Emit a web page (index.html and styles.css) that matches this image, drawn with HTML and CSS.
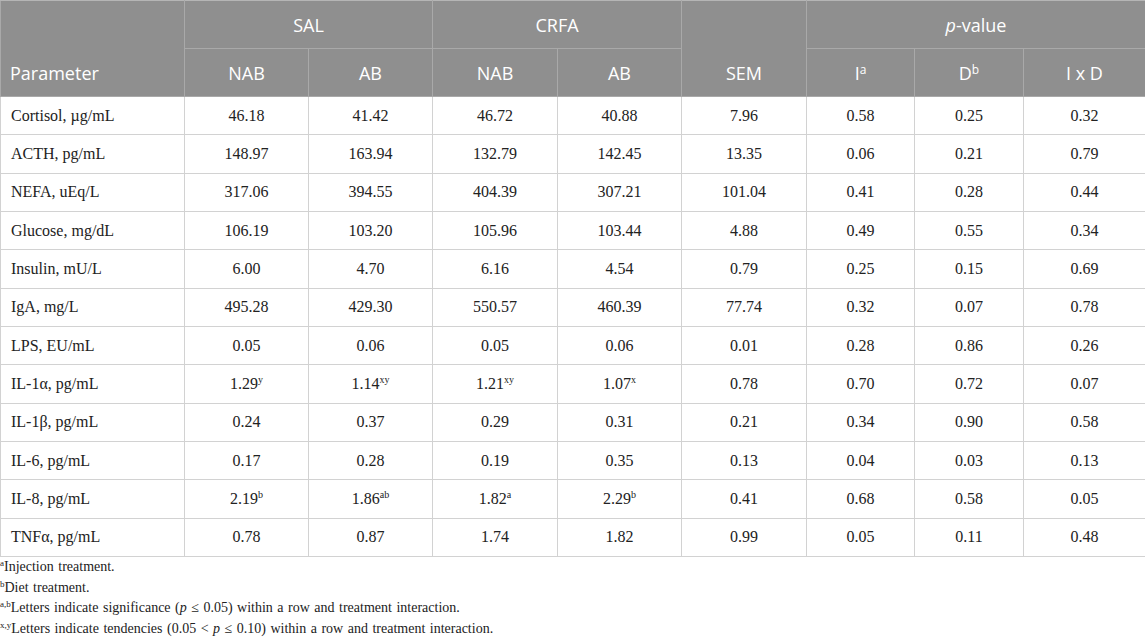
FILE: index.html
```html
<!DOCTYPE html>
<html lang="en">
<head>
<meta charset="UTF-8">
<title>Table</title>
<link rel="stylesheet" href="styles.css">
</head>
<body>
<div class="wrap">
  <table class="stats">
    <colgroup>
      <col style="width:184px"><col style="width:124px"><col style="width:124px">
      <col style="width:125px"><col style="width:124px"><col style="width:125px">
      <col style="width:108px"><col style="width:109px"><col style="width:122px">
    </colgroup>
    <thead>
      <tr>
        <th rowspan="2" class="param">Parameter</th>
        <th colspan="2">SAL</th>
        <th colspan="2">CRFA</th>
        <th rowspan="2" class="low">SEM</th>
        <th colspan="3"><i>p</i>-value</th>
      </tr>
      <tr>
        <th>NAB</th><th>AB</th><th>NAB</th><th>AB</th>
        <th>I<sup>a</sup></th><th>D<sup>b</sup></th><th>I x D</th>
      </tr>
    </thead>
    <tbody>
      <tr><td>Cortisol, µg/mL</td><td>46.18</td><td>41.42</td><td>46.72</td><td>40.88</td><td>7.96</td><td>0.58</td><td>0.25</td><td>0.32</td></tr>
      <tr><td>ACTH, pg/mL</td><td>148.97</td><td>163.94</td><td>132.79</td><td>142.45</td><td>13.35</td><td>0.06</td><td>0.21</td><td>0.79</td></tr>
      <tr><td>NEFA, uEq/L</td><td>317.06</td><td>394.55</td><td>404.39</td><td>307.21</td><td>101.04</td><td>0.41</td><td>0.28</td><td>0.44</td></tr>
      <tr><td>Glucose, mg/dL</td><td>106.19</td><td>103.20</td><td>105.96</td><td>103.44</td><td>4.88</td><td>0.49</td><td>0.55</td><td>0.34</td></tr>
      <tr><td>Insulin, mU/L</td><td>6.00</td><td>4.70</td><td>6.16</td><td>4.54</td><td>0.79</td><td>0.25</td><td>0.15</td><td>0.69</td></tr>
      <tr><td>IgA, mg/L</td><td>495.28</td><td>429.30</td><td>550.57</td><td>460.39</td><td>77.74</td><td>0.32</td><td>0.07</td><td>0.78</td></tr>
      <tr><td>LPS, EU/mL</td><td>0.05</td><td>0.06</td><td>0.05</td><td>0.06</td><td>0.01</td><td>0.28</td><td>0.86</td><td>0.26</td></tr>
      <tr><td>IL-1α, pg/mL</td><td>1.29<sup>y</sup></td><td>1.14<sup>xy</sup></td><td>1.21<sup>xy</sup></td><td>1.07<sup>x</sup></td><td>0.78</td><td>0.70</td><td>0.72</td><td>0.07</td></tr>
      <tr><td>IL-1β, pg/mL</td><td>0.24</td><td>0.37</td><td>0.29</td><td>0.31</td><td>0.21</td><td>0.34</td><td>0.90</td><td>0.58</td></tr>
      <tr><td>IL-6, pg/mL</td><td>0.17</td><td>0.28</td><td>0.19</td><td>0.35</td><td>0.13</td><td>0.04</td><td>0.03</td><td>0.13</td></tr>
      <tr><td>IL-8, pg/mL</td><td>2.19<sup>b</sup></td><td>1.86<sup>ab</sup></td><td>1.82<sup>a</sup></td><td>2.29<sup>b</sup></td><td>0.41</td><td>0.68</td><td>0.58</td><td>0.05</td></tr>
      <tr><td>TNFα, pg/mL</td><td>0.78</td><td>0.87</td><td>1.74</td><td>1.82</td><td>0.99</td><td>0.05</td><td>0.11</td><td>0.48</td></tr>
    </tbody>
  </table>
  <div class="notes">
    <p><sup>a</sup>Injection treatment.</p>
    <p><sup>b</sup>Diet treatment.</p>
    <p><sup>a,b</sup>Letters indicate significance (<i>p</i> ≤ 0.05) within a row and treatment interaction.</p>
    <p><sup>x,y</sup>Letters indicate tendencies (0.05 &lt; <i>p</i> ≤ 0.10) within a row and treatment interaction.</p>
  </div>
</div>
</body>
</html>
```

FILE: styles.css
```css
body {
  margin: 0;
  background: #fff;
  color: #222;
  font-family: "Liberation Serif", "DejaVu Serif", serif;
}
.wrap { width: 1145px; }
.stats {
  border-collapse: collapse;
  table-layout: fixed;
  width: 1145px;
}
.stats th {
  background: #8f8f8f;
  color: #fff;
  font-family: "Open Sans", "Noto Sans", sans-serif;
  font-weight: normal;
  font-size: 18px;
  height: 47px;
  padding: 0;
  text-align: center;
  border: 1px solid #a9a9a9;
  border-top-color: #b5b5b5;
}
.stats th.param { text-align: left; padding-left: 9px; vertical-align: bottom; padding-bottom: 11px; }
.stats th.low { vertical-align: bottom; padding-bottom: 11px; }
.stats th sup { font-size: 12px; vertical-align: 6px; line-height: 0; }
.stats td {
  font-size: 16px;
  height: 37.33px;
  padding: 0;
  text-align: center;
  border: 1px solid #d2d2d2;
}
.stats td:first-child { text-align: left; padding-left: 10px; }
.stats td sup { font-size: 10px; vertical-align: 6px; line-height: 0; }
.notes { padding: 0; }
.notes p {
  margin: 0;
  font-size: 14px;
  line-height: 20.7px;
  word-spacing: 1px;
}
.notes sup { font-size: 9px; vertical-align: 5px; line-height: 0; }
```
